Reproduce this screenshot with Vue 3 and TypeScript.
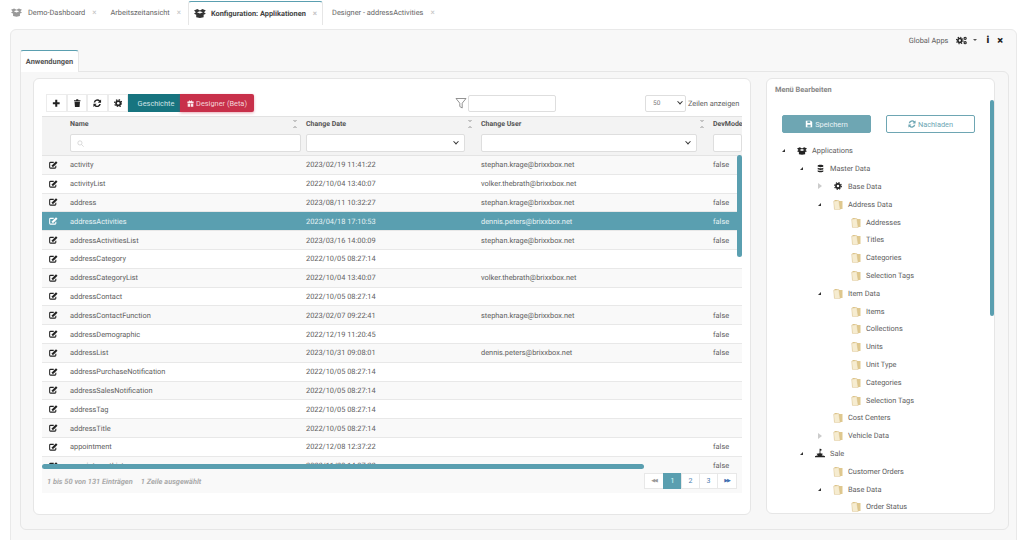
<template>
  <div class="page">
    <div class="tabs">
      <div v-for="t in tabs" :key="t.label" class="tab" :class="{ active: t.active }">
        <svg v-if="t.icon" class="tab-icon" viewBox="0 0 16 12">
          <path d="M0 2 4.500 0 8 2l3.500-2L16 2l-2.500 2.200L16 6.400 13 7.600V11l-5 1-5-1V7.600L0 6.400l2.500-2.200zM4 4.200 8 6l4-1.800L8 2.800z" fill-rule="evenodd" />
        </svg>
        <span>{{ t.label }}</span>
        <span class="tab-x">×</span>
      </div>
    </div>

    <div class="outer">
      <div class="outer-head">
        <span class="global">Global Apps</span>
        <svg class="head-ic" viewBox="0 0 13 10">
          <circle cx="4.500" cy="5" r="2.300" fill="none" stroke="#222" stroke-width="1.900" />
          <circle cx="4.500" cy="5" r="3.900" fill="none" stroke="#222" stroke-width="1.300" stroke-dasharray="1.530 1.530" />
          <circle cx="10.800" cy="2.400" r="1.300" fill="none" stroke="#222" stroke-width="1.300" />
          <circle cx="10.800" cy="7.600" r="1.300" fill="none" stroke="#222" stroke-width="1.300" />
        </svg>
        <span class="caret"></span>
        <span class="info">i</span>
        <span class="close">×</span>
      </div>
      <div class="inner-tab">Anwendungen</div>

      <div class="inner">
        <section class="card table-card">
          <div class="toolbar">
            <div class="tool-group">
              <button class="tool">
                <svg viewBox="0 0 10 10"><path d="M3.800 1h2.400v2.800H9v2.400H6.200V9H3.800V6.200H1V3.800h2.800z" /></svg>
              </button>
              <button class="tool">
                <svg viewBox="0 0 10 10"><path d="M1.200 1.500h2.300L4 .4h2l.5 1.100h2.300v1.100H1.200zM1.800 3.200h6.400l-.5 6.400H2.300z" /></svg>
              </button>
              <button class="tool">
                <svg viewBox="0 0 10 10"><path d="M9.500.500v3.800H5.700l1.400-1.400A2.600 2.600 0 0 0 2.600 4H.8a4.400 4.400 0 0 1 7.500-2.300zM.5 9.500V5.700h3.800L2.900 7.100A2.600 2.600 0 0 0 7.400 6h1.800a4.400 4.400 0 0 1-7.500 2.300z" /></svg>
              </button>
              <button class="tool">
                <svg viewBox="0 0 10 10">
                  <circle cx="5" cy="5" r="2.600" fill="none" stroke="#222" stroke-width="2" />
                  <circle cx="5" cy="5" r="4.200" fill="none" stroke="#222" stroke-width="1.400" stroke-dasharray="1.650 1.650" />
                </svg>
              </button>
            </div>
            <button class="teal-btn">Geschichte</button>
            <button class="red-btn">
              <svg viewBox="0 0 10 10"><path d="M3 .5 5 1.800 7 .5l.6 1.700H9.500v2.300H.5V2.200h1.900zM1 5.200h3.500v4.300H1zM5.500 5.200H9v4.300H5.500z" /></svg>
              Designer (Beta)
            </button>
            <div class="filter">
              <svg viewBox="0 0 12 12"><path d="M1 1.500h10L7.200 6.200V11L4.800 9.500V6.200z" fill="none" stroke="#777" stroke-width=".8" /></svg>
              <div class="filter-input"></div>
            </div>
            <div class="length">
              <div class="length-select"><span>50</span><i class="chev"></i></div>
              <span>Zeilen anzeigen</span>
            </div>
          </div>

          <div class="grid-wrap">
            <div class="row head">
              <div></div>
              <div v-for="c in columns" :key="c" class="hcell">
                <span>{{ c }}</span>
                <i v-if="c !== 'DevMode'" class="sort"></i>
              </div>
            </div>
            <div class="row filters">
              <div></div>
              <div class="fcell">
                <div class="finput">
                  <svg viewBox="0 0 10 10"><circle cx="4.200" cy="4.200" r="3" fill="none" stroke="#ccc" /><path d="m6.500 6.500 3 3" stroke="#ccc" /></svg>
                </div>
              </div>
              <div class="fcell"><div class="finput sel"><i class="chev"></i></div></div>
              <div class="fcell"><div class="finput sel"><i class="chev"></i></div></div>
              <div class="fcell"><div class="finput"></div></div>
            </div>
            <div v-for="(r, i) in rows" :key="r.name" class="row data" :class="{ odd: i % 2 === 0, selected: r.name === 'addressActivities' }">
              <div class="edit">
                <svg viewBox="0 0 11 10"><path d="M8.400 5.800v2.100c0 .6-.4 1-1 1H1.700c-.6 0-1-.4-1-1V2.700c0-.6.4-1 1-1h4.100" fill="none" stroke="currentColor" stroke-width="1.300" /><path d="M8.600.400 10.500 2.300 5.500 7.200H3.600V5.300z" fill="currentColor" /></svg>
              </div>
              <div>{{ r.name }}</div>
              <div>{{ r.date }}</div>
              <div>{{ r.user }}</div>
              <div>{{ r.dev }}</div>
            </div>
            <div class="vbar"></div>
            <div class="hbar"></div>
          </div>

          <div class="foot">
            <div class="foot-info">
              <span>1 bis 50 von 131 Einträgen</span>
              <span>1 Zeile ausgewählt</span>
            </div>
            <div class="pager">
              <span class="pg end muted">◀◀</span>
              <span class="pg current">1</span>
              <span class="pg">2</span>
              <span class="pg">3</span>
              <span class="pg end">▶▶</span>
            </div>
          </div>
        </section>

        <section class="card tree-card">
          <div class="tree-title">Menü Bearbeiten</div>
          <div class="tree-btns">
            <button class="save">
              <svg viewBox="0 0 10 10"><path d="M1 1h6.500L9 2.500V9H1zM3 1.500v2.300h3.500V1.500zM3 6v2.500h4V6z" fill="#fff" fill-rule="evenodd" /></svg>
              Speichern
            </button>
            <button class="reload">
              <svg viewBox="0 0 10 10"><path d="M9.500.500v3.800H5.700l1.400-1.400A2.600 2.600 0 0 0 2.600 4H.8a4.400 4.400 0 0 1 7.500-2.300zM.5 9.500V5.700h3.800L2.900 7.100A2.600 2.600 0 0 0 7.400 6h1.800a4.400 4.400 0 0 1-7.500 2.300z" fill="#6ea6b3" /></svg>
              Nachladen
            </button>
          </div>
          <div class="tree">
            <div v-for="(n, i) in tree" :key="i" class="node" :style="{ paddingLeft: n.level * 18 + 'px' }">
              <i class="arrow-ic" :class="n.arrow"></i>
              <div class="n-slot">
                <svg v-if="n.icon === 'folder'" class="folder" viewBox="0 0 10 11">
                  <path d="M1.500 1h2.700l.8 1H9.500V10H1.500z" fill="#dfc88f" />
                  <path d="M.6 2.300 5.800 1.400 7.200 10.600H1.500z" fill="#f6ecd0" stroke="#d3b97e" stroke-width=".4" />
                </svg>
                <svg v-else-if="n.icon === 'boxes'" class="box" viewBox="0 0 16 12">
                  <path d="M0 2 4.500 0 8 2l3.500-2L16 2l-2.500 2.200L16 6.400 13 7.600V11l-5 1-5-1V7.600L0 6.400l2.500-2.200zM4 4.200 8 6l4-1.800L8 2.800z" fill="#222" fill-rule="evenodd" />
                </svg>
                <svg v-else-if="n.icon === 'db'" class="db" viewBox="0 0 10 12">
                  <path d="M1 1.600C1 .2 9 .2 9 1.600V3.300C9 4.500 1 4.500 1 3.300zM1 4.800c1.500 1 6.500 1 8 0v2.300c0 1.200-8 1.200-8 0zM1 8.500c1.500 1 6.500 1 8 0v1.900c0 1.300-8 1.300-8 0z" fill="#222" />
                </svg>
                <svg v-else-if="n.icon === 'cog'" class="cog" viewBox="0 0 10 10">
                  <circle cx="5" cy="5" r="2.600" fill="none" stroke="#222" stroke-width="2" />
                  <circle cx="5" cy="5" r="4.200" fill="none" stroke="#222" stroke-width="1.400" stroke-dasharray="1.650 1.650" />
                </svg>
                <svg v-else class="ship" viewBox="0 0 12 12">
                  <path d="M5.500 1h1l2 1.500-2 .8v2.900l3 .8-1.500 2H3.500L1.800 7l3.700-.8zM0 10c3-1.600 9-1.600 12 0v1H0z" fill="#222" />
                </svg>
              </div>
              <span>{{ n.label }}</span>
            </div>
          </div>
          <div class="tree-bar"></div>
        </section>
      </div>
    </div>
  </div>
</template>

<script setup lang="ts">
type Row = { name: string; date: string; user?: string; dev?: string }
type TreeNode = { label: string; level: number; icon: string; arrow?: string }

const tabs = [
  { label: 'Demo-Dashboard', icon: true, active: false },
  { label: 'Arbeitszeitansicht', icon: false, active: false },
  { label: 'Konfiguration: Applikationen', icon: true, active: true },
  { label: 'Designer - addressActivities', icon: false, active: false }
]

const columns = ['Name', 'Change Date', 'Change User', 'DevMode']

const krage = 'stephan.krage@brixxbox.net'
const thebrath = 'volker.thebrath@brixxbox.net'
const peters = 'dennis.peters@brixxbox.net'

const rows: Row[] = [
  { name: 'activity', date: '2023/02/19 11:41:22', user: krage, dev: 'false' },
  { name: 'activityList', date: '2022/10/04 13:40:07', user: thebrath },
  { name: 'address', date: '2023/08/11 10:32:27', user: krage, dev: 'false' },
  { name: 'addressActivities', date: '2023/04/18 17:10:53', user: peters, dev: 'false' },
  { name: 'addressActivitiesList', date: '2023/03/16 14:00:09', user: krage, dev: 'false' },
  { name: 'addressCategory', date: '2022/10/05 08:27:14' },
  { name: 'addressCategoryList', date: '2022/10/04 13:40:07', user: thebrath },
  { name: 'addressContact', date: '2022/10/05 08:27:14' },
  { name: 'addressContactFunction', date: '2023/02/07 09:22:41', user: krage, dev: 'false' },
  { name: 'addressDemographic', date: '2022/12/19 11:20:45', dev: 'false' },
  { name: 'addressList', date: '2023/10/31 09:08:01', user: peters, dev: 'false' },
  { name: 'addressPurchaseNotification', date: '2022/10/05 08:27:14' },
  { name: 'addressSalesNotification', date: '2022/10/05 08:27:14' },
  { name: 'addressTag', date: '2022/10/05 08:27:14' },
  { name: 'addressTitle', date: '2022/10/05 08:27:14' },
  { name: 'appointment', date: '2022/12/08 12:37:22', dev: 'false' },
  { name: 'appointmentList', date: '2022/11/30 14:07:22', dev: 'false' }
]

const tree: TreeNode[] = [
  { label: 'Applications', level: 0, icon: 'boxes', arrow: 'open' },
  { label: 'Master Data', level: 1, icon: 'db', arrow: 'open' },
  { label: 'Base Data', level: 2, icon: 'cog', arrow: 'closed' },
  { label: 'Address Data', level: 2, icon: 'folder', arrow: 'open' },
  { label: 'Addresses', level: 3, icon: 'folder' },
  { label: 'Titles', level: 3, icon: 'folder' },
  { label: 'Categories', level: 3, icon: 'folder' },
  { label: 'Selection Tags', level: 3, icon: 'folder' },
  { label: 'Item Data', level: 2, icon: 'folder', arrow: 'open' },
  { label: 'Items', level: 3, icon: 'folder' },
  { label: 'Collections', level: 3, icon: 'folder' },
  { label: 'Units', level: 3, icon: 'folder' },
  { label: 'Unit Type', level: 3, icon: 'folder' },
  { label: 'Categories', level: 3, icon: 'folder' },
  { label: 'Selection Tags', level: 3, icon: 'folder' },
  { label: 'Cost Centers', level: 2, icon: 'folder' },
  { label: 'Vehicle Data', level: 2, icon: 'folder', arrow: 'closed' },
  { label: 'Sale', level: 1, icon: 'ship', arrow: 'open' },
  { label: 'Customer Orders', level: 2, icon: 'folder' },
  { label: 'Base Data', level: 2, icon: 'folder', arrow: 'open' },
  { label: 'Order Status', level: 3, icon: 'folder' }
]
</script>

<style>
body {
  margin: 0;
  background: #fff;
}
</style>

<style scoped>
.page {
  width: 1024px;
  height: 540px;
  overflow: hidden;
  font-family: Roboto, "Liberation Sans", sans-serif;
  font-size: 7.4px;
  text-rendering: geometricPrecision;
  color: #606060;
  background: #fff;
  opacity: .999;
}

.tabs {
  display: flex;
  height: 29px;
  padding: 1px 0 0 11px;
  box-sizing: border-box;
  white-space: nowrap;
}

.tab {
  display: flex;
  align-items: center;
  height: 23px;
  color: #666;
  padding-right: 14px;
}

.tab:nth-child(2) {
  padding-right: 7px;
}

.tab-icon {
  width: 11px;
  height: 9px;
  margin-right: 6px;
  fill: #999;
}

.tab-x {
  margin-left: 7px;
  color: #c4c4c4;
  font-size: 8px;
}

.tab.active {
  margin-right: 9px;
  padding: 0 5px;
  width: 135px;
  box-sizing: border-box;
  height: 24px;
  background: #fff;
  border: 1px solid #e6e6e6;
  border-top: 1px solid #5a9fb0;
  border-bottom: 0;
  border-radius: 3px 3px 0 0;
  color: #444;
  font-weight: 700;
}

.tab.active .tab-icon {
  width: 12px;
  margin-right: 5px;
  fill: #333;
}

.outer {
  margin-left: 10px;
  width: 1007px;
  height: 530px;
  box-sizing: border-box;
  padding-left: 9px;
  background: #f8f8f8;
  border: 1px solid #e9e9e9;
  border-radius: 6px 6px 0 0;
}

.outer-head {
  display: flex;
  align-items: center;
  justify-content: flex-end;
  height: 20px;
  padding-right: 13px;
}

.global {
  margin-right: 8px;
}

.head-ic {
  width: 11px;
  height: 9px;
}

.caret {
  margin: 0 9px 0 6px;
  border: 2px solid transparent;
  border-top-color: #555;
  border-bottom: 0;
}

.info {
  color: #222;
  font-weight: 900;
  font-size: 10px;
  margin-right: 8px;
}

.close {
  color: #222;
  font-weight: 900;
  font-size: 11px;
}

.inner-tab {
  width: 59px;
  height: 22px;
  box-sizing: border-box;
  line-height: 21px;
  text-align: center;
  font-weight: 700;
  color: #555;
  background: #fff;
  border: 1px solid #e6e6e6;
  border-top: 1px solid #5a9fb0;
  border-bottom: 0;
  border-radius: 3px 3px 0 0;
  margin-bottom: -1px;
  position: relative;
  z-index: 1;
}

.inner {
  display: flex;
  align-items: flex-start;
  gap: 15px;
  width: 989px;
  height: 459px;
  box-sizing: border-box;
  padding: 6px 12px 0;
  background: #f7f7f7;
  border: 1px solid #e6e6e6;
  border-radius: 0 6px 6px 6px;
}

.card {
  position: relative;
  box-sizing: border-box;
  background: #fff;
  border: 1px solid #e6e6e6;
  border-radius: 6px;
}

.table-card {
  width: 718px;
  height: 437px;
  padding: 15px 8px 0;
}

.toolbar {
  display: flex;
  align-items: center;
  height: 18px;
  padding-left: 4px;
  margin-bottom: 4px;
}

.tool-group {
  display: flex;
  flex: none;
}

button {
  font: inherit;
  padding: 0;
  box-sizing: border-box;
}

.tool {
  display: flex;
  align-items: center;
  justify-content: center;
  width: 20.500px;
  height: 18px;
  background: #fff;
  border: 1px solid #ececec;
}

.tool svg {
  width: 8.500px;
  height: 8.500px;
  fill: #222;
}

.teal-btn {
  flex: none;
  width: 52px;
  height: 18px;
  padding-left: 4px;
  background: #17747f;
  color: #cfe3e6;
  border: 0;
}

.red-btn {
  flex: none;
  display: flex;
  align-items: center;
  justify-content: center;
  gap: 2px;
  width: 74px;
  height: 18px;
  background: #c8304a;
  color: #f4d3d9;
  border: 0;
  border-radius: 0 2px 2px 0;
  box-shadow: 0 1px 3px rgba(200, 48, 74, .4);
}

.red-btn svg {
  width: 7px;
  height: 7px;
  fill: #fbe9ec;
}

.filter {
  flex: none;
  display: flex;
  align-items: center;
  gap: 1px;
  margin-left: 201px;
}

.filter svg {
  width: 12px;
  height: 12px;
}

.filter-input {
  width: 88px;
  height: 17px;
  box-sizing: border-box;
  background: #fff;
  border: 1px solid #dedede;
  border-radius: 2px;
}

.length {
  flex: none;
  display: flex;
  align-items: center;
  gap: 2px;
  margin-left: 89px;
  white-space: nowrap;
}

.length-select {
  display: flex;
  align-items: center;
  justify-content: space-between;
  width: 41px;
  height: 17px;
  box-sizing: border-box;
  padding: 0 3px 0 7px;
  background: #fff;
  border: 1px solid #dedede;
  border-radius: 2px;
  color: #777;
  font-size: 6.500px;
}

.chev {
  width: 3px;
  height: 3px;
  border: solid #333;
  border-width: 0 1.500px 1.500px 0;
  transform: rotate(45deg) translate(-1px, -1px);
}

.grid-wrap {
  position: relative;
  width: 700px;
  height: 353px;
  overflow: hidden;
}

.row {
  display: grid;
  grid-template-columns: 28px 236px 175px 232px 1fr;
  align-items: center;
}

.head {
  height: 15px;
  background: #f3f3f3;
  border-top: 1px solid #e2e2e2;
  box-sizing: border-box;
  font-weight: 700;
  font-size: 7px;
  color: #555;
}

.hcell {
  display: flex;
  align-items: center;
  justify-content: space-between;
  padding-right: 9px;
  white-space: nowrap;
}

.hcell:last-child {
  padding-right: 0;
}

.sort {
  width: 4px;
  height: 8px;
  background:
    linear-gradient(45deg, transparent 50%, #c4c4c4 50%) 0 0 / 2px 3px no-repeat,
    linear-gradient(-45deg, transparent 50%, #c4c4c4 50%) 2px 0 / 2px 3px no-repeat,
    linear-gradient(135deg, transparent 50%, #c4c4c4 50%) 0 5px / 2px 3px no-repeat,
    linear-gradient(-135deg, transparent 50%, #c4c4c4 50%) 2px 5px / 2px 3px no-repeat;
}

.filters {
  height: 25px;
  background: #f3f3f3;
  border-bottom: 1px solid #e4e4e4;
  box-sizing: border-box;
}

.fcell {
  padding-right: 5px;
}

.fcell:nth-child(3),
.fcell:nth-child(4) {
  padding-right: 16px;
}

.fcell:last-child {
  padding-right: 0;
}

.finput {
  display: flex;
  align-items: center;
  height: 18px;
  box-sizing: border-box;
  padding: 0 6px;
  background: #fff;
  border: 1px solid #dedede;
  border-radius: 2px;
}

.finput svg {
  width: 7px;
  height: 7px;
}

.finput.sel {
  justify-content: flex-end;
}

.data {
  height: 18.800px;
  box-sizing: border-box;
  border-bottom: 1px solid #e8e8e8;
  background: #fff;
}

.data.odd {
  background: #f9f9f9;
}

.data.selected {
  background: #5a9fb0;
  color: #e8f3f5;
}

.edit {
  display: flex;
  justify-content: center;
  padding-right: 5px;
  color: #222;
}

.selected .edit {
  color: #fff;
}

.edit svg {
  width: 9px;
  height: 8px;
}

.vbar {
  position: absolute;
  top: 39px;
  right: 0;
  width: 5px;
  height: 102px;
  background: #5a9fb0;
  border-radius: 3px;
}

.hbar {
  position: absolute;
  left: 0;
  bottom: 0;
  width: 602px;
  height: 5px;
  background: #5a9fb0;
  border-radius: 3px;
}

.foot {
  display: flex;
  align-items: center;
  justify-content: space-between;
  width: 700px;
  height: 24px;
  box-sizing: border-box;
  padding: 0 5px;
  background: #f9f9f9;
}

.foot-info {
  display: flex;
  gap: 8px;
  font-style: italic;
  font-weight: 700;
  color: #aaa;
}

.pager {
  display: flex;
}

.pg {
  display: flex;
  align-items: center;
  justify-content: center;
  width: 19px;
  height: 16px;
  box-sizing: border-box;
  background: #fff;
  border: 1px solid #e8e8e8;
  margin-left: -1px;
  color: #4b7dae;
  font-size: 7px;
}

.pg.end {
  width: 20px;
  font-size: 5px;
  letter-spacing: -1px;
  color: #3f6fb0;
}

.pg.muted {
  color: #999;
}

.pg.current {
  background: #5a9fb0;
  border-color: #5a9fb0;
  color: #dff;
}

.tree-card {
  width: 229px;
  height: 436px;
  overflow: hidden;
  padding: 5px 0 0 8px;
}

.tree-title {
  font-weight: 700;
  color: #888;
  height: 12px;
  line-height: 12px;
}

.tree-btns {
  display: flex;
  gap: 15px;
  margin: 19px 0 9px 7px;
}

.tree-btns button {
  display: flex;
  align-items: center;
  justify-content: center;
  gap: 2px;
  width: 89px;
  height: 18px;
  border-radius: 2px;
}

.tree-btns svg {
  width: 8px;
  height: 8px;
}

.save {
  background: #6ea6b3;
  color: #e9f3f5;
  border: 1px solid #6ea6b3;
}

.reload {
  background: #fff;
  color: #6ea6b3;
  border: 1px solid #6ea6b3;
}

.tree {
  padding-left: 7px;
}

.node {
  display: flex;
  align-items: center;
  height: 17.800px;
  white-space: nowrap;
}

.arrow-ic {
  flex: none;
  width: 4px;
  height: 6px;
  margin-right: 10px;
  box-sizing: border-box;
}

.arrow-ic.open {
  margin-right: 11px;
  box-sizing: content-box;
  width: 0;
  height: 0;
  border-style: solid;
  border-width: 0 0 3px 3px;
  border-color: transparent transparent #333 transparent;
}

.arrow-ic.closed {
  border-style: solid;
  border-width: 3px 0 3px 4px;
  border-color: transparent transparent transparent #ccc;
}

.n-slot {
  flex: none;
  display: flex;
  align-items: center;
  justify-content: center;
  width: 12px;
  height: 12px;
  margin-right: 4px;
}

.folder {
  width: 10px;
  height: 11px;
}

.box {
  width: 10px;
  height: 8px;
}

.db {
  width: 7px;
  height: 9px;
}

.cog {
  width: 8px;
  height: 8px;
}

.ship {
  width: 10px;
  height: 10px;
}

.tree-bar {
  position: absolute;
  top: 21px;
  right: 0;
  width: 4px;
  height: 216px;
  background: #5a9fb0;
  border-radius: 2px;
}
</style>
